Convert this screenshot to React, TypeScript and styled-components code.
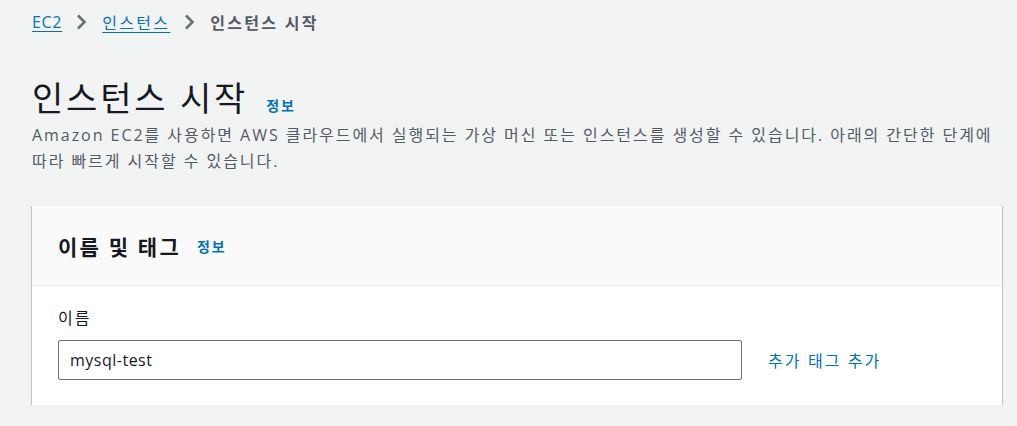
import React from "react";
import styled, { createGlobalStyle } from "styled-components";

const GlobalStyle = createGlobalStyle`
  html, body {
    margin: 0;
    padding: 0;
    background: #f2f3f3;
  }
  body {
    font-family: "Open Sans", "Noto Sans CJK KR", sans-serif;
    color: #16191f;
  }
`;

const Page = styled.div`
  padding: 8px 15px 0 32px;
  display: flex;
  flex-direction: column;
`;

const Breadcrumbs = styled.nav`
  display: flex;
  align-items: center;
  height: 28px;
  font-size: 16px;
`;

const Crumb = styled.a<{ $spacing?: number }>`
  color: #0073bb;
  text-decoration: underline;
  text-underline-offset: 3px;
  letter-spacing: ${(p) => p.$spacing ?? 2.3}px;
`;

const CurrentCrumb = styled.span`
  color: #545b64;
  font-weight: 700;
  letter-spacing: 2.3px;
`;

const Chevron = styled.span`
  display: inline-flex;
  margin: 0 15px 0 13px;
  color: #687078;
`;

const Header = styled.header`
  margin-top: 40px;
  display: flex;
  align-items: baseline;
  gap: 18px;
`;

const Title = styled.h1`
  margin: 0;
  font-size: 34px;
  font-weight: 400;
  line-height: 44px;
  letter-spacing: 2.8px;
  color: #16191f;
`;

const InfoLink = styled.a`
  color: #0073bb;
  font-size: 14px;
  font-weight: 700;
  letter-spacing: 2px;
  text-decoration: none;
`;

const Description = styled.p`
  margin: 2px 0 0;
  font-size: 16px;
  line-height: 26px;
  letter-spacing: 1.95px;
  color: #545b64;
  max-width: 970px;
`;

const Card = styled.section`
  margin-top: 31px;
  width: 970px;
  background: #fff;
  box-shadow: 0 1px 1px 0 rgba(0, 28, 36, 0.3), 1px 1px 1px 0 rgba(0, 28, 36, 0.15),
    -1px 1px 1px 0 rgba(0, 28, 36, 0.15);
  border-top: 1px solid #eaeded;
`;

const CardHeader = styled.div`
  background: #fafafa;
  border-bottom: 1px solid #eaeded;
  height: 79px;
  padding: 0 26px;
  display: flex;
  align-items: center;
  gap: 16px;
`;

const CardTitle = styled.h2`
  margin: 0;
  font-size: 21px;
  font-weight: 700;
  letter-spacing: 2.2px;
  color: #16191f;
`;

const CardBody = styled.div`
  padding: 20px 26px 25px;
`;

const Label = styled.label`
  display: block;
  font-size: 16px;
  line-height: 24px;
  letter-spacing: 2px;
  color: #16191f;
  margin-bottom: 10px;
`;

const FieldRow = styled.div`
  display: flex;
  align-items: center;
  gap: 26px;
`;

const Input = styled.input`
  box-sizing: border-box;
  width: 684px;
  height: 40px;
  border: 1px solid #687078;
  border-radius: 2px;
  padding: 0 11px;
  font-family: "Open Sans", "Noto Sans CJK KR", sans-serif;
  font-size: 16px;
  letter-spacing: 0.5px;
  color: #16191f;
  background: #fff;
`;

const TextLink = styled.a`
  color: #0073bb;
  font-size: 16px;
  letter-spacing: 2.1px;
  text-decoration: none;
`;

const ChevronIcon = () => (
  <svg width="12" height="18" viewBox="0 0 12 18" fill="none">
    <path d="M3 2.5l6.5 6.5-6.5 6.5" stroke="currentColor" strokeWidth="2.6" />
  </svg>
);

export default function App() {
  return (
    <>
      <GlobalStyle />
      <Page>
        <Breadcrumbs>
          <Crumb $spacing={0.7}>EC2</Crumb>
          <Chevron>
            <ChevronIcon />
          </Chevron>
          <Crumb>인스턴스</Crumb>
          <Chevron>
            <ChevronIcon />
          </Chevron>
          <CurrentCrumb>인스턴스 시작</CurrentCrumb>
        </Breadcrumbs>
        <Header>
          <Title>인스턴스 시작</Title>
          <InfoLink>정보</InfoLink>
        </Header>
        <Description>
          Amazon EC2를 사용하면 AWS 클라우드에서 실행되는 가상 머신 또는 인스턴스를 생성할 수 있습니다. 아래의 간단한 단계에 따라 빠르게 시작할 수 있습니다.
        </Description>
        <Card>
          <CardHeader>
            <CardTitle>이름 및 태그</CardTitle>
            <InfoLink>정보</InfoLink>
          </CardHeader>
          <CardBody>
            <Label>이름</Label>
            <FieldRow>
              <Input defaultValue="mysql-test" />
              <TextLink>추가 태그 추가</TextLink>
            </FieldRow>
          </CardBody>
        </Card>
      </Page>
    </>
  );
}
